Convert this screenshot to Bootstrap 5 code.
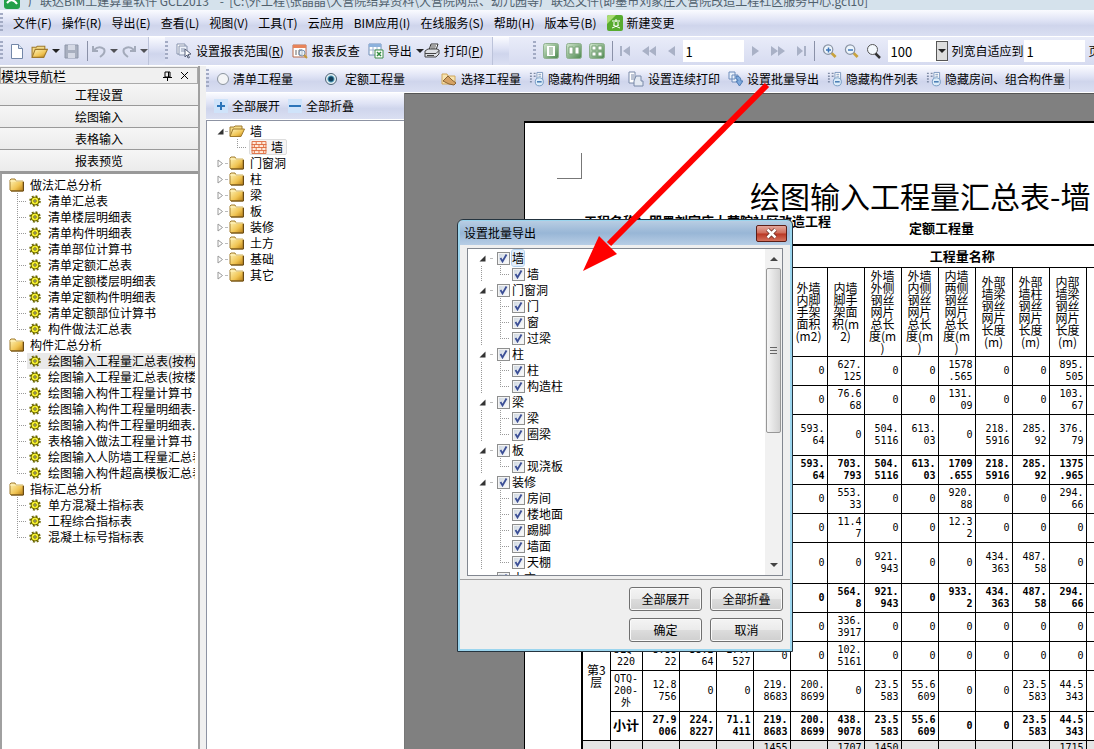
<!DOCTYPE html>
<html lang="zh-CN">
<head>
<meta charset="utf-8">
<meta name="viewport" content="width=device-width, initial-scale=1">
<title>广联达BIM土建算量软件 GCL2013</title>
<link href="https://cdn.jsdelivr.net/npm/bootstrap@5.3.0/dist/css/bootstrap.min.css" rel="stylesheet">
<style>
  body { font: 12px/16px "Noto Sans CJK SC", sans-serif; color: #000; background: #f0f0f0; height: 100vh; overflow: hidden; }
  button, input { font: inherit; color: inherit; }
  svg { display: block; flex: none; }
  a { color: inherit; text-decoration: none; }
  ul { list-style: none; margin: 0; padding: 0; }

  .titlebar { height: 10px; background: #d5e2ec; color: #50606c; overflow: hidden; padding-left: 4px; }
  .titlebar > * { margin-bottom: 1px; }
  .strip { background: linear-gradient(#fafbff, #dfe3f5 40%, #cfd5ec 60%, #dadff2); border-bottom: 1px solid #fff; white-space: nowrap; overflow: hidden; }
  .strip > *, .tool > * { flex: none; }
  .menus { height: 27px; gap: 10px; }
  .tools { height: 29px; }
  .views, .fold { height: 27px; }
  .flat { background: linear-gradient(#e9ecf9, #d6dbf0); height: 100%; border-right: 1px solid #bcc3da; }
  .pager { gap: 7px; }
  .grip { width: 3px; height: 20px; background: repeating-linear-gradient(#a3abc4 0 2px, transparent 2px 4px); }
  .rule { width: 1px; height: 20px; background: #8a91a8; }
  .tool { display: flex; align-items: center; gap: 4px; border: 0; background: none; padding: 0; white-space: nowrap; }
  .caret { border: 4px solid transparent; border-top-color: #222; border-bottom: 0; width: 0; height: 0; }
  .num { width: 61px; height: 22px; border: 0; padding: 0 3px; background: #fff; border-radius: 0; font-size: 13px; }
  .combo { width: 60px; height: 22px; background: #fff; }
  .combo input { width: 48px; height: 22px; }
  .combo button { width: 12px; height: 20px; border: 1px solid #555; background: #ddd; padding: 0 1px; }
  .round { appearance: none; width: 12px; height: 12px; border: 1px solid #8b949e; border-radius: 50%; background: #f3f4f6; margin: 0; }
  .round:checked { background: radial-gradient(circle, #123f5c 0 2px, #4c9cba 3px, #e8f2f6 4px); border-color: #4a6274; }

  .navpane { width: 200px; border-right: 2px solid #a0a0a0; padding-top: 1px; }
  .navhead { height: 17px; border: 1px solid #aaa; font-size: 13px; line-height: 14px; }
  .navhead button { border: 0; background: none; padding: 0; }
  .navbtn { height: 22px; border: 0; border-bottom: 1px solid #999; background: linear-gradient(#f6f6f6, #ebebeb); width: 100%; padding: 0; }
  .content { margin-left: 6px; }
  .treebox { background: #fff; overflow: hidden; }
  .navtree { border-left: 2px solid #a0a0a0; border-top: 2px solid #999; padding: 3px 3px 0 7px; }
  .leaf, .branch { display: flex; height: 16px; align-items: center; white-space: nowrap; }
  .leaf > *, .branch > * { flex: none; }
  .twig { height: 16px; width: 12px; background:
      repeating-linear-gradient(#999 0 1px, transparent 1px 2px) 0 0 / 1px 16px no-repeat,
      repeating-linear-gradient(90deg, #999 0 1px, transparent 1px 2px) 0 8px / 10px 1px no-repeat; }
  .end > .twig { background-size: 1px 8px, 10px 1px; }
  .navtree .leaf { padding-left: 8px; overflow: hidden; }
  .navtree .leaf a { padding-left: 7px; }
  .navtree .branch a { padding-left: 5px; }
  .navtree .picked { background: linear-gradient(90deg, #fff 18px, #e9e9e9 18px); }

  .midpane { width: 199px; border-right: 1px solid #777; }
  .parts { border-left: 1px solid #8d93a3; border-top: 1px solid #8d93a3; padding: 2px 0 0 10px; }
  .parts .branch a { padding-left: 5px; }
  .parts .branch .dash { width: 3px; margin: 0 1px; }
  .parts .leaf { padding-left: 20px; }
  .parts .leaf a { border: 1px solid #ddd; border-radius: 2px; background: #f6f4f4; height: 16px; line-height: 14px; padding: 0 3px 0 1px; gap: 4px; }
  .dash { width: 3px; height: 1px; background: #bbb; }

  .report { background: #808080; overflow: hidden; border-top: 1px solid #555; padding: 27px 0 0 119px; min-width: 0; }
  .sheet { width: 820px; height: 100%; min-height: 640px; background: #fff; border: 1px solid #000; border-width: 2px 0 0 1px; padding: 30px 0 0 32px; }
  .corner { width: 25px; height: 26px; border: 1px solid #777; border-width: 0 1px 1px 0; }
  .sheet h1 { font: 30px/32px "Noto Sans CJK SC", sans-serif; margin: 0; padding-left: 193px; white-space: nowrap; }
  .facts { font-size: 13px; font-weight: 700; height: 33px; padding: 2px 0 0 27px; }
  .facts span:last-child { margin: 7px 0 0 78px; }
  .grid { table-layout: fixed; width: 689px; margin-left: 24px; border-collapse: collapse; border: 2px solid #000; }
  .grid col { width: 37px; } .grid col.c1 { width: 28px; } .grid col.c2 { width: 32px; }
  .grid td, .grid th { border: 1px solid #000; padding: 0 2px 0 0; text-align: right; vertical-align: middle; font: 10px/12px "DejaVu Sans Mono", "Noto Sans CJK SC", monospace; white-space: nowrap; }
  .grid .floor, .grid .kind { padding: 0; text-align: center; font-size: 10px; }
  .grid .floor { font: 12px/12px "Noto Sans CJK SC", sans-serif; }
  .grid .sub > * { font-weight: 700; }
  .grid .sub .kind { font-size: 13px; }
  .grid tr { height: 29px; }
  .grid .cap { height: 22px; } .grid .heads { height: 89px; } .grid .tall { height: 41px; }
  .grid .cap th { font: 700 13px/16px "Noto Sans CJK SC", sans-serif; text-align: center; padding: 0 0 0 12px; }
  .grid .heads th { font: 12px/12px "Noto Sans CJK SC", sans-serif; text-align: center; padding: 0; }
  .grid .shade { background: #e4e4e4; }

  .dialogbox { left: 457px; top: 219px; width: 336px; height: 433px; border: 1px solid #25343f; border-radius: 6px 6px 0 0; background: #efefef; box-shadow: inset 0 0 0 2px #9bd5ee; overflow: hidden; }
  .dialoghead { height: 24px; margin: 1px 2px 0; padding: 0 3px 0 4px; background: linear-gradient(#b8cde3, #98b6d6 50%, #b7cde5); }
  .dialoghead h2 { font-size: 12px; font-weight: 400; margin: 0; }
  .shut { width: 31px; height: 17px; border: 1px solid #5c1d16; border-radius: 2px; background: linear-gradient(#e4a79c, #cf6a58 48%, #b93623 52%, #d4715d); padding: 0; }
  .picks { margin: 3px 9px 0; height: 328px; border: 1px solid #828790; background: #fff; overflow: hidden; }
  .picks .branch { padding-left: 11px; }
  .picks .leaf { padding-left: 13px; }
  .picks .leaf .twig:first-child { width: 19px; background-size: 1px 16px, 0 0; }
  .picks ul { padding-top: 1px; }
  .tick { appearance: none; width: 13px; height: 13px; margin: 0 2px 0 0; border: 1px solid #8e8f8f; background: linear-gradient(135deg, #c9d2dc, #fff); box-shadow: inset 0 0 0 1px #f4f4f4; }
  .tick:checked { background: url("data:image/svg+xml,%3Csvg xmlns='http://www.w3.org/2000/svg' viewBox='0 0 11 11'%3E%3Cpath d='M2.5 5l2 3.5 4-7' fill='none' stroke='%233c4f96' stroke-width='1.8'/%3E%3C/svg%3E"), linear-gradient(135deg, #ccd5df, #fff); }
  .hot { outline: 1px solid #b5d3f0; background: #e3effc; border-radius: 2px; }
  .scroll { width: 17px; background: #f1f1f1; padding: 8px 1px; }
  .scroll .thumb { height: 165px; width: 15px; border: 1px solid #979797; border-radius: 2px; background: linear-gradient(90deg, #f5f5f5, #d2d2d2); margin-top: 7px; }
  .thumb i { width: 7px; height: 7px; background: repeating-linear-gradient(#666 0 1px, transparent 1px 3px); }
  .tri { border: 4px solid transparent; width: 0; height: 0; }
  .tri.up { border-top: 0; border-bottom-color: #444; }
  .tri.down { border-bottom: 0; border-top-color: #444; }
  .acts { border-top: 1px solid #a0a0a0; margin: 3px 2px 0; padding: 7px 7px 0 0; display: grid; grid-template-columns: 73px 73px; gap: 7px 8px; justify-content: end; }
  .acts button { height: 24px; border: 1px solid #707070; border-radius: 3px; background: linear-gradient(#f4f4f4, #ebebeb 48%, #dcdcdc 52%, #cfcfcf); padding: 0; box-shadow: inset 0 0 0 1px #fafafa; }
  .pointer { left: 575px; top: 75px; pointer-events: none; }
</style>
</head>
<body class="d-flex flex-column position-relative">

<svg width="0" height="0" class="position-absolute">
  <defs>
    <linearGradient id="gold" x1="0" y1="0" x2="1" y2="1"><stop offset="0" stop-color="#fff6bd"/><stop offset=".6" stop-color="#f0c453"/><stop offset="1" stop-color="#b97d12"/></linearGradient>
    <linearGradient id="leafy" x1="0" y1="0" x2="1" y2="1"><stop offset="0" stop-color="#d3e8cf"/><stop offset="1" stop-color="#4a864d"/></linearGradient>
    <symbol id="folder" viewBox="0 0 16 14"><path d="M1 12V2l1-1h4l1 2h7v10H2z" fill="url(#gold)" stroke="#a07a2c"/><path d="M1 3h13" stroke="#fff3c0"/><path d="M14.500 4v9H2" stroke="#6b4a12" fill="none"/></symbol>
    <symbol id="opened" viewBox="0 0 16 14"><path d="M1 12V3h4l1-1h7v3" fill="#f3da86" stroke="#a07a2c"/><path d="M1 12.500L4 5h11.500L12 12.500z" fill="url(#gold)" stroke="#a07a2c"/></symbol>
    <symbol id="gear" viewBox="0 0 12 12"><circle cx="6" cy="6" r="4" fill="#f4ee2e" stroke="#6b6700"/><circle cx="6" cy="6" r="5" fill="none" stroke="#6b6700" stroke-width="1.600" stroke-dasharray="1.960 1.960"/><circle cx="6" cy="6" r="1.200" fill="#fff" stroke="#5a5600"/></symbol>
    <symbol id="bricks" viewBox="0 0 16 14"><path d="M.5.5h15v13H.5z" fill="#ffeadb" stroke="#dd6b3f"/><path d="M0 3.800h16M0 7h16M0 10.300h16M5 1v3M11 1v3M3 4v3M8 4v3M13 4v3M5 7v3M11 7v3M3 10v3M8 10v3M13 10v3" stroke="#dd6b3f"/></symbol>
    <symbol id="twist" viewBox="0 0 7 9"><path d="M1 1l4.500 3.500L1 8z" fill="#fff" stroke="#999"/></symbol>
    <symbol id="spread" viewBox="0 0 7 7"><path d="M6.500 .5v6h-6z" fill="#333"/></symbol>
    <symbol id="hide" viewBox="0 0 16 16"><path d="M1 2h2M1 5h2M1 8h2M1 11h2M5 2h2M5 5h2" stroke="#7f8ba5" stroke-width="1.500"/><path d="M8.500 1h6v7h-6z" fill="#fff" stroke="#7c98bd"/><path d="M10 3h3M10 5h3" stroke="#7c98bd"/><circle cx="11" cy="11" r="4.300" fill="#dcecf9" stroke="#7298c0"/><path d="M8.500 11h5" stroke="#3c73ad" stroke-width="1.500"/></symbol>
    <symbol id="lens" viewBox="0 0 16 16"><path d="M10 10l4.500 4.500" stroke="#c9a23d" stroke-width="3"/><circle cx="6.500" cy="6.500" r="5" fill="#edf5fc" stroke="#8b95a5" stroke-width="1.300"/></symbol>
    <symbol id="tile" viewBox="0 0 16 16"><rect x=".5" y=".5" width="15" height="15" rx="2" fill="url(#leafy)" stroke="#8fb08f"/></symbol>
  </defs>
</svg>

<header>
  <div class="titlebar d-flex align-items-end">
    <svg width="16" height="16" class="me-2"><rect width="16" height="16" rx="3" fill="#22a04a"/><path d="M3 10q5-6 10 1" stroke="#fff" stroke-width="2" fill="none"/></svg>
    <span class="text-nowrap">广联达BIM土建算量软件 GCL2013&nbsp;&nbsp;&nbsp; - &nbsp;[C:\外工程\张晶晶\大营院结算资料\大营院网点、幼儿园等广联达文件(即墨市刘家庄大营院改造工程社区服务中心.gcl10]</span>
  </div>

  <nav class="strip menus d-flex align-items-center">
    <span class="grip"></span>
    <a href="#">文件(F)</a><a href="#">操作(R)</a><a href="#">导出(E)</a><a href="#">查看(L)</a><a href="#">视图(V)</a><a href="#">工具(T)</a><a href="#">云应用</a><a href="#">BIM应用(I)</a><a href="#">在线服务(S)</a><a href="#">帮助(H)</a><a href="#">版本号(B)</a>
    <button class="tool" type="button"><svg width="16" height="16"><rect width="16" height="16" rx="2" fill="#57ab2e"/><path d="M0 9L9 0H2Q0 0 0 2z" fill="#a9dc73"/><path d="M5 6h8M9 4v3M7 7v3M11 7v3M5 13l7-3M6 10l7 3" stroke="#fff" fill="none"/></svg>新建变更</button>
  </nav>

  <div class="strip tools d-flex align-items-center">
    <div class="flat d-flex align-items-center">
      <span class="grip me-2"></span>
      <button class="tool" type="button" aria-label="新建"><svg width="12" height="15"><path d="M.5.5h7l4 4v10H.5z" fill="#fff" stroke="#7387a8"/><path d="M7.500 .5v4h4" fill="#dbe6f4" stroke="#7387a8"/></svg></button>
      <button class="tool ms-2" type="button" aria-label="打开"><svg width="17" height="15"><use href="#opened"/></svg><i class="caret"></i></button>
      <button class="tool ms-1" type="button" aria-label="保存"><svg width="15" height="15"><path d="M1 1h13v13H1z" fill="#a8afbf" stroke="#8f97aa"/><path d="M4 1h7v5H4zM4 9h7v5H4z" fill="#d5d9e5"/></svg></button>
      <span class="rule ms-2"></span>
      <button class="tool ms-1" type="button" aria-label="撤销"><svg width="14" height="14"><path d="M1 2v5h5M2 6q5-5 10-1 2 4-4 8" fill="none" stroke="#a3aaba" stroke-width="2"/></svg><i class="caret opacity-75"></i></button>
      <button class="tool ms-1" type="button" aria-label="重做"><svg width="14" height="14"><path d="M13 2v5H8M12 6Q7 1 2 5q-2 4 4 8" fill="none" stroke="#a3aaba" stroke-width="2"/></svg><i class="caret opacity-75"></i></button>
    </div>
    <div class="flat d-flex align-items-center ms-3 pe-2">
      <span class="grip me-1"></span>
      <button class="tool ms-1" type="button"><svg width="16" height="16"><path d="M1 1h8v10H1z" fill="#fff" stroke="#8793ad"/><path d="M3 3h8v9H3z" fill="#eef2fa" stroke="#8793ad"/><path d="M5 6h4M5 8h4" stroke="#8793ad"/><path d="M9 6l6 5-3 .5 1.500 3-1.500.5-1-3-2 2z" fill="#fff" stroke="#555f78"/></svg><span>设置报表范围(<u>R</u>)</span></button>
      <button class="tool ms-2" type="button"><svg width="16" height="16"><path d="M1 2h13v12H1z" fill="#fff" stroke="#b86a4a"/><path d="M1 2h13v3H1z" fill="#e8835a"/><path d="M4 7v5M7 7h3v5H7z" stroke="#666" fill="none"/><circle cx="10" cy="10" r="3" fill="#dceaf6aa" stroke="#7790ae"/><path d="M12 12l3 3" stroke="#c39a3a" stroke-width="2"/></svg>报表反查</button>
      <button class="tool ms-2" type="button"><svg width="16" height="16"><path d="M1 1h12v11H1z" fill="#fff" stroke="#6f8fb8"/><path d="M1 1h12v3H1z" fill="#8db1dc"/><path d="M1 7h12M5 4v8M9 4v8" stroke="#9fb4cf"/><path d="M7 7h8v8H7z" fill="#fff" stroke="#3f8c4a"/><path d="M9 9l4 4M13 9l-4 4" stroke="#2d8a3d" stroke-width="1.500"/></svg>导出<i class="caret"></i></button>
      <button class="tool" type="button"><svg width="16" height="16"><path d="M5 7l2-6h7l-2 6" fill="#fff" stroke="#333"/><path d="M1 8l3-2h9l2 1v4l-3 3H1z" fill="#dfe1e5" stroke="#444"/><path d="M1 10.500h11l3-3M7 3h5M6.500 5h5M3 12.500h7" stroke="#444" fill="none"/></svg><span>打印(<u>P</u>)</span></button>
    </div>
    <div class="flat pager d-flex align-items-center ms-3 ps-4 border-0">
      <span class="grip ms-n1"></span>
      <button class="tool" type="button" aria-label="单页"><svg width="16" height="16"><use href="#tile"/><path d="M4 3h8v10H4z" fill="#fff"/><path d="M6 5h4M6 7h4M6 9h4M6 11h4" stroke="#78a078"/></svg></button>
      <button class="tool" type="button" aria-label="双页"><svg width="16" height="16"><use href="#tile"/><path d="M3 4h4v7H3zM9 4h4v7H9z" fill="#fff" stroke="#7ba37b"/></svg></button>
      <button class="tool" type="button" aria-label="多页"><svg width="16" height="16"><use href="#tile"/><path d="M3 3h4v4H3zM9 3h4v4H9zM3 9h4v4H3zM9 9h4v4H9z" fill="#fff" stroke="#7ba37b"/></svg></button>
      <span class="rule"></span>
      <button class="tool" type="button" aria-label="首页"><svg width="11" height="12"><path d="M0 1h2v10H0zM10 1v10L3 6z" fill="#a9b1c6"/></svg></button>
      <button class="tool ms-1" type="button" aria-label="快退"><svg width="15" height="12"><path d="M7 1v10L0 6zM14 1v10L7 6z" fill="#a9b1c6"/></svg></button>
      <button class="tool ms-1" type="button" aria-label="上一页"><svg width="8" height="12"><path d="M7 1v10L0 6z" fill="#a9b1c6"/></svg></button>
      <input class="num" aria-label="页码" value="1">
      <button class="tool" type="button" aria-label="下一页"><svg width="8" height="12"><path d="M1 1v10l7-5z" fill="#a9b1c6"/></svg></button>
      <button class="tool ms-1" type="button" aria-label="快进"><svg width="15" height="12"><path d="M1 1v10l7-5zM8 1v10l7-5z" fill="#a9b1c6"/></svg></button>
      <button class="tool ms-1" type="button" aria-label="末页"><svg width="11" height="12"><path d="M1 1v10l6-5zM8 1h2v10H8z" fill="#a9b1c6"/></svg></button>
      <span class="rule"></span>
      <button class="tool" type="button" aria-label="放大"><svg width="15" height="16"><use href="#lens"/><path d="M4 7h5M6.500 4.500v5" stroke="#3e76b8" stroke-width="1.500"/></svg></button>
      <button class="tool" type="button" aria-label="缩小"><svg width="15" height="16"><use href="#lens"/><path d="M4 7h5" stroke="#3e76b8" stroke-width="1.500"/></svg></button>
      <button class="tool" type="button" aria-label="缩放"><svg width="15" height="16"><path d="M9 10l5 5" stroke="#333" stroke-width="2.500"/><circle cx="6.500" cy="6.500" r="5" fill="#f3f8fd" stroke="#555"/></svg></button>
      <div class="d-flex align-items-center">
        <div class="combo d-flex align-items-center"><input class="num" aria-label="缩放比例" value="100"><button type="button" aria-label="选择比例"><i class="caret d-block"></i></button></div>
        <label for="fit" class="ps-1">列宽自适应到</label><input class="num me-1" id="fit" value="1"><span>页</span>
      </div>
    </div>
  </div>
</header>

<main class="d-flex flex-fill">
  <aside class="navpane d-flex flex-column flex-shrink-0">
    <div class="navhead d-flex align-items-center flex-shrink-0">
      <span class="flex-fill">模块导航栏</span>
      <button type="button" aria-label="固定"><svg width="9" height="10"><path d="M2 1h5v5H2zM5.500 1v5M0 6.500h9M4.500 6v4" fill="none" stroke="#000"/></svg></button>
      <button type="button" aria-label="关闭" class="mx-2"><svg width="9" height="9"><path d="M1 1l7 7M8 1L1 8" stroke="#000"/></svg></button>
    </div>
    <button class="navbtn" type="button">工程设置</button><button class="navbtn" type="button">绘图输入</button><button class="navbtn" type="button">表格输入</button><button class="navbtn" type="button">报表预览</button>
    <nav class="treebox navtree flex-fill"><ul id="reports"></ul></nav>
  </aside>

  <section class="content d-flex flex-column flex-fill overflow-hidden">
    <div class="strip views d-flex align-items-center">
      <span class="grip me-1"></span>
      <input class="round ms-1" type="radio" name="kind" id="bill"><label for="bill" class="ms-1 me-2">清单工程量</label>
      <input class="round ms-4 me-2" type="radio" name="kind" id="quota" checked><label for="quota">定额工程量</label>
      <button class="tool ms-4 ps-2" type="button"><svg width="16" height="16" class="ms-1"><path d="M1 3h5l1 2h7v8H1z" fill="#f7e3b0" stroke="#d0a75a"/><path d="M2 10l5-5 4 4 4 3-2 2-5-1z" fill="#d5a264" stroke="#8a6334"/></svg>选择工程量</button>
      <button class="tool ms-2" type="button"><svg width="15" height="16"><use href="#hide"/></svg>隐藏构件明细</button>
      <button class="tool ms-2" type="button"><svg width="16" height="16"><path d="M1 1h6v11H1z" fill="#fff" stroke="#7889a8"/><path d="M3 4h3M3 6h3M3 8h3" stroke="#7889a8"/><path d="M6 10l2-5h5v5h2v5H6z" fill="#e3e9f2" stroke="#7889a8"/></svg>设置连续打印</button>
      <button class="tool ms-2" type="button"><svg width="15" height="16"><path d="M1 1h6v7H1zM4 4h6v7H4z" fill="#e9f1fb" stroke="#6c8cbb"/><path d="M8 5q5 0 5 5h2l-3.500 5L8 10h2q0-2-2-2z" fill="#7ea9dc" stroke="#4f7cb5"/></svg>设置批量导出</button>
      <button class="tool ms-2" type="button"><svg width="15" height="16"><use href="#hide"/></svg>隐藏构件列表</button>
      <button class="tool ms-2 pe-1" type="button"><svg width="15" height="16"><use href="#hide"/></svg>隐藏房间、组合构件量</button>
      <span class="rule opacity-50"></span>
    </div>
    <div class="d-flex flex-fill overflow-hidden">
      <div class="midpane d-flex flex-column flex-shrink-0">
        <div class="strip fold d-flex align-items-center ps-1">
          <button class="tool" type="button"><svg width="14" height="14" class="ms-1"><path d="M0 0h14v14H0z" fill="#cfe3fa"/><path d="M3 7h8M7 3v8" stroke="#2b74b9" stroke-width="2"/></svg>全部展开</button>
          <button class="tool ms-2" type="button"><svg width="14" height="14"><path d="M0 0h14v14H0z" fill="#cfe3fa"/><path d="M1 7h12" stroke="#2b74b9" stroke-width="2"/></svg>全部折叠</button>
        </div>
        <nav class="treebox parts flex-fill"><ul id="parts"></ul></nav>
      </div>
      <div class="report flex-fill">
        <article class="sheet">
          <div class="corner"></div>
          <h1>绘图输入工程量汇总表-墙</h1>
          <div class="facts d-flex"><span>工程名称：即墨刘家庄大营院社区改造工程</span><span>定额工程量</span></div>
          <table class="grid"><colgroup id="cols"></colgroup><thead id="heads"></thead><tbody id="cells"></tbody></table>
        </article>
      </div>
    </div>
  </section>
</main>

<section class="dialogbox position-absolute" role="dialog" aria-labelledby="dlg">
  <div class="dialoghead d-flex align-items-center justify-content-between">
    <h2 id="dlg">设置批量导出</h2>
    <button class="shut" type="button" aria-label="关闭"><svg width="29" height="15"><path d="M10.500 3.500l8 8M18.500 3.500l-8 8" stroke="#6b2a22" stroke-width="4"/><path d="M10.500 3.500l8 8M18.500 3.500l-8 8" stroke="#fff" stroke-width="2.500"/></svg></button>
  </div>
  <div class="picks d-flex">
    <ul id="picks" class="flex-fill"></ul>
    <div class="scroll d-flex flex-column align-items-center">
      <i class="tri up"></i>
      <div class="thumb d-flex align-items-center justify-content-center"><i></i></div>
      <i class="tri down mt-auto"></i>
    </div>
  </div>
  <div class="acts"><button type="button">全部展开</button><button type="button">全部折叠</button><button type="button">确定</button><button type="button">取消</button></div>
</section>

<svg class="pointer position-absolute" width="200" height="200"><path d="M192 10L34 169" stroke="#f00" stroke-width="6"/><path d="M8 196L24 161L42 179z" fill="#f00"/></svg>

<script>
  const icon = (id, w, h) => `<svg width="${w}" height="${h}"><use href="#${id}"/></svg>`;
  const last = (list, i) => i === list.length - 1 ? ' end' : '';

  const reports = [
    ['做法汇总分析', '清单汇总表 清单楼层明细表 清单构件明细表 清单部位计算书 清单定额汇总表 清单定额楼层明细表 清单定额构件明细表 清单定额部位计算书 构件做法汇总表'],
    ['构件汇总分析', '绘图输入工程量汇总表(按构件) 绘图输入工程量汇总表(按楼层) 绘图输入构件工程量计算书 绘图输入构件工程量明细表- 绘图输入构件工程量明细表.. 表格输入做法工程量计算书 绘图输入人防墙工程量汇总表 绘图输入构件超高模板汇总表'],
    ['指标汇总分析', '单方混凝土指标表 工程综合指标表 混凝土标号指标表']
  ];
  document.getElementById('reports').innerHTML = reports.map(([name, kids], g) =>
    `<li class="branch">${icon('folder', 16, 14)}<a href="#">${name}</a></li>` +
    kids.split(' ').map((k, i, all) => `<li class="leaf${last(all, i)}${g === 1 && i === 0 ? ' picked' : ''}"><span class="twig"></span>${icon('gear', 12, 12)}<a href="#">${k}</a></li>`).join('')).join('');

  document.getElementById('parts').innerHTML =
    `<li class="branch">${icon('spread', 7, 7)}<span class="dash"></span>${icon('opened', 16, 14)}<a href="#">墙</a></li>` +
    `<li class="leaf end"><span class="twig"></span><a href="#" class="d-flex align-items-center">${icon('bricks', 16, 13)}墙</a></li>` +
    '门窗洞 柱 梁 板 装修 土方 基础 其它'.split(' ').map(n => `<li class="branch">${icon('twist', 7, 9)}<span class="dash"></span>${icon('folder', 16, 14)}<a href="#">${n}</a></li>`).join('');

  const picks = { 墙: '墙', 门窗洞: '门 窗 过梁', 柱: '柱 构造柱', 梁: '梁 圈梁', 板: '现浇板', 装修: '房间 楼地面 踢脚 墙面 天棚', 土方: '' };
  let n = 0;
  const box = (text, hot) => `<input class="tick" type="checkbox" checked id="p${++n}"><label for="p${n}"${hot ? ' class="hot"' : ''}>${text}</label>`;
  document.getElementById('picks').innerHTML = Object.entries(picks).map(([name, kids], g) =>
    `<li class="branch">${icon('spread', 7, 7)}<span class="dash ms-1 me-1"></span>${box(name, g === 0)}</li>` +
    (kids ? kids.split(' ').map((k, i, all) => `<li class="leaf${last(all, i)}"><span class="twig"></span><span class="twig"></span>${box(k)}</li>`).join('') : '')).join('');

  const COLS = 17;
  const pad = list => list.concat(Array(COLS - list.length).fill(''));
  const lines = s => s.replace(/\//g, '<br>');
  const heads = ['', '', '', '', '外墙/内脚/手架/面积/(m2)', '内墙/脚手/架面/积(m/2)', '外墙/外侧/钢丝/网片/总长/度(m/)', '外墙/内侧/钢丝/网片/总长/度(m/)', '内墙/两侧/钢丝/网片/总长/度(m/)', '外部/墙梁/钢丝/网片/长度/(m)', '外部/墙柱/钢丝/网片/长度/(m)', '内部/墙梁/钢丝/网片/长度/(m)'];
  document.getElementById('cols').innerHTML = '<col class="c1"><col class="c2">' + '<col>'.repeat(COLS);
  document.getElementById('heads').innerHTML =
    `<tr class="cap"><th class="floor" rowspan="2"></th><th class="kind" rowspan="2"></th><th colspan="${COLS}">工程量名称</th></tr>` +
    `<tr class="heads">${pad(heads).map(h => `<th>${lines(h)}</th>`).join('')}</tr>`;

  // floor (with its row count), kind, row class, values
  const rows = [
    ['4', '', '', ',,,,0,627. /125,0,0,1578/.565,0,0,895. /505'],
    ['', '', '', ',,,,0,76.6/68,0,0,131. /09,0,0,103. /67'],
    ['', '', 'tall', ',,,,593. /64,0,504. /5116,613. /03,0,218. /5916,285. /92,376. /79'],
    ['', '', 'sub', ',,,,593. /64,703. /793,504. /5116,613. /03,1709/.655,218. /5916,285. /92,1375/.965'],
    ['4', '', '', ',,,,0,553. /33,0,0,920. /88,0,0,294. /66'],
    ['', '', '', ',,,,0,11.4/7,0,0,12.3/2,0,0,0'],
    ['', '', 'tall', ',,,,0,0,921. /943,0,0,434. /363,487. /58,0'],
    ['', '', 'sub', ',,,,0,564. /8,921. /943,0,933. /2,434. /363,487. /58,294. /66'],
    ['4第3/层', '', '', ',,,,0,336. /3917,0,0,0,0,0,0'],
    ['', 'JLQ-/220', '', '8.88/22,38.2/64,27.7/527,0,0,102. /5161,0,0,0,0,0,0'],
    ['', 'QTQ-/200-/外', 'tall', '12.8/756,0,0,219. /8683,200. /8699,0,23.5/583,55.6/609,0,0,23.5/583,44.5/343'],
    ['', '小计', 'sub', '27.9/006,224. /8227,71.1/411,219. /8683,200. /8699,438. /9078,23.5/583,55.6/609,0,0,23.5/583,44.5/343'],
    ['1', '', 'shade', ',,,1455/.22,,1707/.37,1450/.12,,,,,1715/.16']
  ];
  document.getElementById('cells').innerHTML = rows.map(([floor, kind, cls, vals]) =>
    `<tr class="${cls}">` + (floor ? `<th class="floor" rowspan="${floor[0]}">${lines(floor.slice(1))}</th>` : '') +
    `<th class="kind">${lines(kind)}</th>` +
    pad(vals.split(',')).map(v => `<td>${lines(v)}</td>`).join('') + '</tr>').join('');
</script>
<script src="https://cdn.jsdelivr.net/npm/bootstrap@5.3.0/dist/js/bootstrap.bundle.min.js"></script>
</body>
</html>
